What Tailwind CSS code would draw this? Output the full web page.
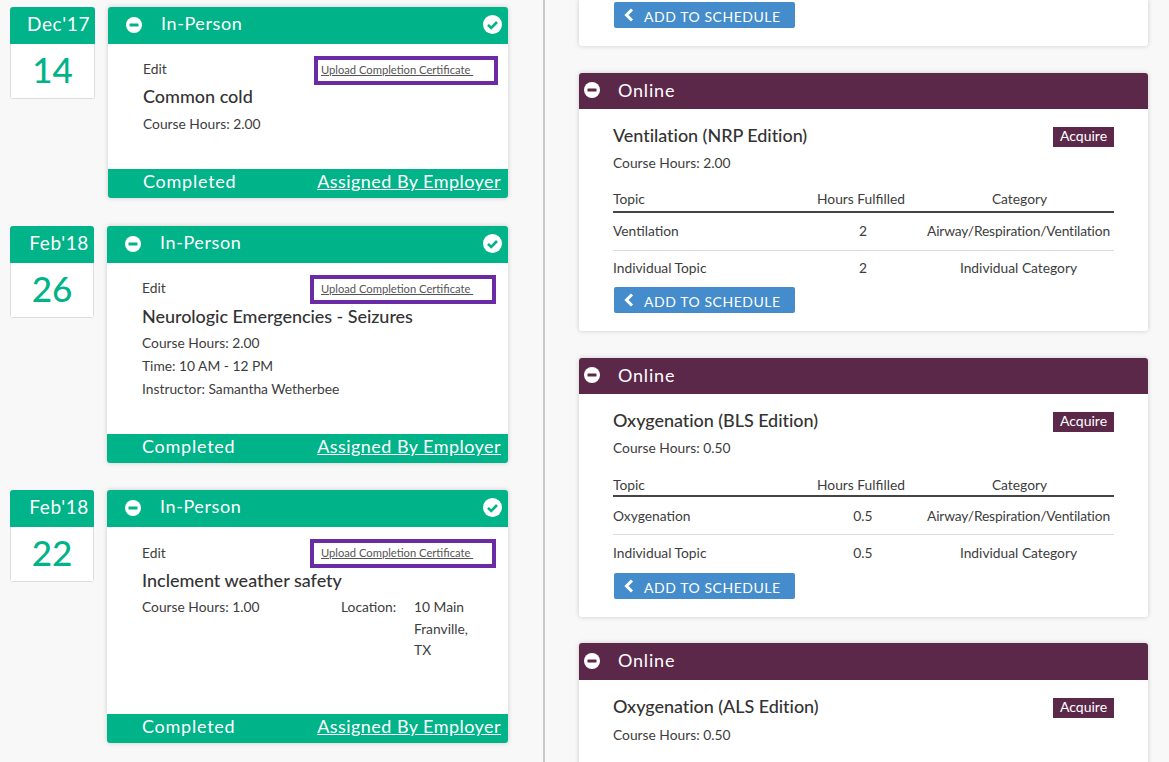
<!doctype html>
<html lang="en">
  <head>
    <meta charset="UTF-8" />
    <script src="https://cdn.jsdelivr.net/npm/@tailwindcss/browser@4"></script>
    <title>Courses</title>
  </head>
  <body class="bg-[#f8f8f8] font-['Lato',sans-serif] text-[#3d3d3d] overflow-hidden h-[762px]">
    <div class="flex h-[762px] overflow-hidden">
      <!-- completed courses -->
      <div class="w-[543px] shrink-0 pt-[7px] flex flex-col">
        <div class="flex pl-[10px] h-[191px]">
          <div class="w-[85px] h-[92px] rounded-[3px] overflow-hidden shrink-0">
            <div class="bg-[#00b388] h-[37px] text-white text-[19px] tracking-[0.6px] text-right pr-[5px] leading-[33px]">Dec'17</div>
            <div class="bg-white border-x border-b border-[#dddddd] h-[55px] text-[#00b388] text-[35px] font-medium leading-[50px] text-center">14</div>
          </div>
          <div class="ml-[13px] w-[400px] rounded-[3px] bg-white shadow-[0_0_5px_rgba(0,0,0,0.18)] overflow-hidden flex flex-col">
            <div class="bg-[#00b388] h-[37px] flex items-center text-white shrink-0 pl-[18px] pr-[6px] pb-[2px]">
              <svg width="16" height="16" viewBox="0 0 16 16"><circle cx="8" cy="8" r="8" fill="#fff"/><rect x="3.5" y="6.5" width="9" height="3" rx="0.5" fill="#00b388"/></svg>
              <span class="ml-[19px] text-[18px] tracking-[0.6px] pb-[2px]">In-Person</span>
              <svg class="ml-auto" width="19" height="19" viewBox="0 0 19 19"><circle cx="9.5" cy="9.5" r="9.5" fill="#fff"/><path d="M5 9.8l3.2 3.2 5.8-6" fill="none" stroke="#00b388" stroke-width="2.6"/></svg>
            </div>
            <div class="flex-1 relative pl-[35px] pt-[16px]">
              <div class="text-[13.8px] leading-[17px]">Edit</div>
              <div class="text-[18px] leading-[22px] mt-[8px] font-medium text-[#333333]">Common cold</div>
              <div class="text-[13.8px] leading-[17px] mt-[8px]">Course Hours: 2.00</div>
              <div class="absolute left-[206px] top-[12px] w-[184px] h-[29px] border-[4px] border-[#6b2ba5] pl-[3px] text-[11.2px] leading-[20px] text-[#555555]"><span class="underline">Upload Completion Certificate&nbsp;</span></div>
            </div>
            <div class="bg-[#00b388] h-[29px] flex items-center justify-between text-white text-[18px] pl-[35px] pr-[7px] pb-[4px] shrink-0">
              <span class="tracking-[0.75px]">Completed</span><span class="underline tracking-[0.45px]">Assigned By Employer</span>
            </div>
          </div>
        </div>

        <div class="flex pl-[10px] h-[237px] mt-[28px]">
          <div class="w-[84px] h-[92px] rounded-[3px] overflow-hidden shrink-0">
            <div class="bg-[#00b388] h-[37px] text-white text-[19px] tracking-[0.6px] text-right pr-[5px] leading-[33px]">Feb'18</div>
            <div class="bg-white border-x border-b border-[#dddddd] h-[55px] text-[#00b388] text-[35px] font-medium leading-[50px] text-center">26</div>
          </div>
          <div class="ml-[13px] w-[401px] rounded-[3px] bg-white shadow-[0_0_5px_rgba(0,0,0,0.18)] overflow-hidden flex flex-col">
            <div class="bg-[#00b388] h-[37px] flex items-center text-white shrink-0 pl-[18px] pr-[6px] pb-[2px]">
              <svg width="16" height="16" viewBox="0 0 16 16"><circle cx="8" cy="8" r="8" fill="#fff"/><rect x="3.5" y="6.5" width="9" height="3" rx="0.5" fill="#00b388"/></svg>
              <span class="ml-[19px] text-[18px] tracking-[0.6px] pb-[2px]">In-Person</span>
              <svg class="ml-auto" width="19" height="19" viewBox="0 0 19 19"><circle cx="9.5" cy="9.5" r="9.5" fill="#fff"/><path d="M5 9.8l3.2 3.2 5.8-6" fill="none" stroke="#00b388" stroke-width="2.6"/></svg>
            </div>
            <div class="flex-1 relative pl-[35px] pt-[16px]">
              <div class="text-[13.8px] leading-[17px]">Edit</div>
              <div class="text-[18px] leading-[22px] mt-[9px] font-medium text-[#333333] tracking-[-0.05px]">Neurologic Emergencies - Seizures</div>
              <div class="text-[13.8px] leading-[17px] mt-[7px]">Course Hours: 2.00</div>
              <div class="text-[13.8px] leading-[17px] mt-[6px]">Time: 10 AM - 12 PM</div>
              <div class="text-[13.8px] leading-[17px] mt-[5.5px]">Instructor: Samantha Wetherbee</div>
              <div class="absolute left-[203px] top-[12px] w-[186px] h-[29px] border-[4px] border-[#6b2ba5] pl-[7px] text-[11.2px] leading-[20px] text-[#555555]"><span class="underline">Upload Completion Certificate&nbsp;</span></div>
            </div>
            <div class="bg-[#00b388] h-[29px] flex items-center justify-between text-white text-[18px] pl-[35px] pr-[7px] pb-[4px] shrink-0">
              <span class="tracking-[0.75px]">Completed</span><span class="underline tracking-[0.45px]">Assigned By Employer</span>
            </div>
          </div>
        </div>

        <div class="flex pl-[10px] h-[253px] mt-[27px]">
          <div class="w-[84px] h-[92px] rounded-[3px] overflow-hidden shrink-0">
            <div class="bg-[#00b388] h-[37px] text-white text-[19px] tracking-[0.6px] text-right pr-[5px] leading-[33px]">Feb'18</div>
            <div class="bg-white border-x border-b border-[#dddddd] h-[55px] text-[#00b388] text-[35px] font-medium leading-[50px] text-center">22</div>
          </div>
          <div class="ml-[13px] w-[401px] rounded-[3px] bg-white shadow-[0_0_5px_rgba(0,0,0,0.18)] overflow-hidden flex flex-col">
            <div class="bg-[#00b388] h-[37px] flex items-center text-white shrink-0 pl-[18px] pr-[6px] pb-[2px]">
              <svg width="16" height="16" viewBox="0 0 16 16"><circle cx="8" cy="8" r="8" fill="#fff"/><rect x="3.5" y="6.5" width="9" height="3" rx="0.5" fill="#00b388"/></svg>
              <span class="ml-[19px] text-[18px] tracking-[0.6px] pb-[2px]">In-Person</span>
              <svg class="ml-auto" width="19" height="19" viewBox="0 0 19 19"><circle cx="9.5" cy="9.5" r="9.5" fill="#fff"/><path d="M5 9.8l3.2 3.2 5.8-6" fill="none" stroke="#00b388" stroke-width="2.6"/></svg>
            </div>
            <div class="flex-1 relative pl-[35px] pt-[17px]">
              <div class="text-[13.8px] leading-[17px]">Edit</div>
              <div class="text-[18px] leading-[22px] mt-[8px] font-medium text-[#333333]">Inclement weather safety</div>
              <div class="flex mt-[7px] text-[13.8px]">
                <div class="w-[199px] leading-[17px]">Course Hours: 1.00</div>
                <div class="w-[73px] leading-[17px]">Location:</div>
                <div class="w-[60px] leading-[21.5px] -mt-[2px]">10 Main Franville, TX</div>
              </div>
              <div class="absolute left-[203px] top-[12px] w-[186px] h-[29px] border-[4px] border-[#6b2ba5] pl-[7px] text-[11.2px] leading-[20px] text-[#555555]"><span class="underline">Upload Completion Certificate&nbsp;</span></div>
            </div>
            <div class="bg-[#00b388] h-[29px] flex items-center justify-between text-white text-[18px] pl-[35px] pr-[7px] pb-[4px] shrink-0">
              <span class="tracking-[0.75px]">Completed</span><span class="underline tracking-[0.45px]">Assigned By Employer</span>
            </div>
          </div>
        </div>
      </div>

      <!-- available courses -->
      <div class="flex-1 border-l-2 border-[#c9c9c9] pl-[34px] pr-[21px] flex flex-col">
        <div class="bg-white rounded-b-[3px] shadow-[0_0_5px_rgba(0,0,0,0.18)] h-[46px] pl-[35px] pt-[2px] shrink-0">
          <button class="flex items-center w-[181px] h-[26px] bg-[#448ccb] rounded-[2px] text-white text-[14px] tracking-[0.55px] pl-[9px]">
            <svg width="12" height="14" viewBox="0 0 12 14"><path d="M9 1.5L3.5 7 9 12.5" fill="none" stroke="#fff" stroke-width="3"/></svg>
            <span class="ml-[9px] pt-[2px]">ADD TO SCHEDULE</span>
          </button>
        </div>

        <div class="bg-white rounded-[3px] shadow-[0_0_5px_rgba(0,0,0,0.18)] h-[258px] mt-[27px] shrink-0 overflow-hidden">
          <div class="bg-[#5c2849] h-[36px] flex items-center text-white pl-[5px] pb-[2px]">
            <svg width="16" height="16" viewBox="0 0 16 16"><circle cx="8" cy="8" r="8" fill="#fff"/><rect x="3.5" y="6.5" width="9" height="3" rx="0.5" fill="#5c2849"/></svg>
            <span class="ml-[18px] text-[18px] tracking-[0.8px]">Online</span>
          </div>
          <div class="px-[34px] relative">
            <div class="flex justify-between items-start pt-[15px]">
              <div class="text-[18px] leading-[22px] font-medium text-[#333333] tracking-[-0.05px]">Ventilation (NRP Edition)</div>
              <div class="bg-[#5c2849] text-white text-[14px] w-[61px] h-[20px] leading-[18px] text-center mt-[3px]">Acquire</div>
            </div>
            <div class="text-[13.8px] leading-[17px] mt-[7px]">Course Hours: 2.00</div>
            <div class="grid grid-cols-[190px_120px_191px] text-[13.8px] mt-[20px]">
              <div class="h-[22px] leading-[15px] border-b-2 border-[#444444]">Topic</div>
              <div class="h-[22px] leading-[15px] border-b-2 border-[#444444] text-center pr-[4px]">Hours Fulfilled</div>
              <div class="h-[22px] leading-[15px] border-b-2 border-[#444444] text-center pl-[2px]">Category</div>
              <div class="h-[38px] leading-[36px] border-b border-[#dddddd]">Ventilation</div>
              <div class="h-[38px] leading-[36px] border-b border-[#dddddd] text-center">2</div>
              <div class="h-[38px] leading-[36px] border-b border-[#dddddd] text-center whitespace-nowrap tracking-[-0.15px]">Airway/Respiration/Ventilation</div>
              <div class="h-[36px] leading-[33px]">Individual Topic</div>
              <div class="h-[36px] leading-[33px] text-center">2</div>
              <div class="h-[36px] leading-[33px] text-center">Individual Category</div>
            </div>
            <button class="flex items-center w-[181px] h-[26px] bg-[#448ccb] rounded-[2px] text-white text-[14px] tracking-[0.55px] pl-[9px] ml-[1px]">
              <svg width="12" height="14" viewBox="0 0 12 14"><path d="M9 1.5L3.5 7 9 12.5" fill="none" stroke="#fff" stroke-width="3"/></svg>
              <span class="ml-[9px] pt-[2px]">ADD TO SCHEDULE</span>
            </button>
          </div>
        </div>

        <div class="bg-white rounded-[3px] shadow-[0_0_5px_rgba(0,0,0,0.18)] h-[259px] mt-[27px] shrink-0 overflow-hidden">
          <div class="bg-[#5c2849] h-[36px] flex items-center text-white pl-[5px] pb-[2px]">
            <svg width="16" height="16" viewBox="0 0 16 16"><circle cx="8" cy="8" r="8" fill="#fff"/><rect x="3.5" y="6.5" width="9" height="3" rx="0.5" fill="#5c2849"/></svg>
            <span class="ml-[18px] text-[18px] tracking-[0.8px]">Online</span>
          </div>
          <div class="px-[34px] relative">
            <div class="flex justify-between items-start pt-[15px]">
              <div class="text-[18px] leading-[22px] font-medium text-[#333333] tracking-[-0.05px]">Oxygenation (BLS Edition)</div>
              <div class="bg-[#5c2849] text-white text-[14px] w-[61px] h-[20px] leading-[18px] text-center mt-[3px]">Acquire</div>
            </div>
            <div class="text-[13.8px] leading-[17px] mt-[7px]">Course Hours: 0.50</div>
            <div class="grid grid-cols-[190px_120px_191px] text-[13.8px] mt-[20px]">
              <div class="h-[21px] leading-[17px] border-b-2 border-[#444444]">Topic</div>
              <div class="h-[21px] leading-[17px] border-b-2 border-[#444444] text-center pr-[4px]">Hours Fulfilled</div>
              <div class="h-[21px] leading-[17px] border-b-2 border-[#444444] text-center pl-[2px]">Category</div>
              <div class="h-[38px] leading-[38px] border-b border-[#dddddd]">Oxygenation</div>
              <div class="h-[38px] leading-[38px] border-b border-[#dddddd] text-center">0.5</div>
              <div class="h-[38px] leading-[38px] border-b border-[#dddddd] text-center whitespace-nowrap tracking-[-0.15px]">Airway/Respiration/Ventilation</div>
              <div class="h-[37px] leading-[35px]">Individual Topic</div>
              <div class="h-[37px] leading-[35px] text-center">0.5</div>
              <div class="h-[37px] leading-[35px] text-center">Individual Category</div>
            </div>
            <button class="flex items-center w-[181px] h-[26px] bg-[#448ccb] rounded-[2px] text-white text-[14px] tracking-[0.55px] pl-[9px] ml-[1px] mt-[1px]">
              <svg width="12" height="14" viewBox="0 0 12 14"><path d="M9 1.5L3.5 7 9 12.5" fill="none" stroke="#fff" stroke-width="3"/></svg>
              <span class="ml-[9px] pt-[2px]">ADD TO SCHEDULE</span>
            </button>
          </div>
        </div>

        <div class="bg-white rounded-t-[3px] shadow-[0_0_5px_rgba(0,0,0,0.18)] h-[200px] mt-[26px] shrink-0 overflow-hidden">
          <div class="bg-[#5c2849] h-[37px] flex items-center text-white pl-[5px] pb-[2px]">
            <svg width="16" height="16" viewBox="0 0 16 16"><circle cx="8" cy="8" r="8" fill="#fff"/><rect x="3.5" y="6.5" width="9" height="3" rx="0.5" fill="#5c2849"/></svg>
            <span class="ml-[18px] text-[18px] tracking-[0.8px]">Online</span>
          </div>
          <div class="px-[34px]">
            <div class="flex justify-between items-start pt-[15px]">
              <div class="text-[18px] leading-[22px] font-medium text-[#333333] tracking-[-0.05px]">Oxygenation (ALS Edition)</div>
              <div class="bg-[#5c2849] text-white text-[14px] w-[61px] h-[20px] leading-[18px] text-center mt-[3px]">Acquire</div>
            </div>
            <div class="text-[13.8px] leading-[17px] mt-[8px]">Course Hours: 0.50</div>
          </div>
        </div>
      </div>
    </div>
  </body>
</html>
